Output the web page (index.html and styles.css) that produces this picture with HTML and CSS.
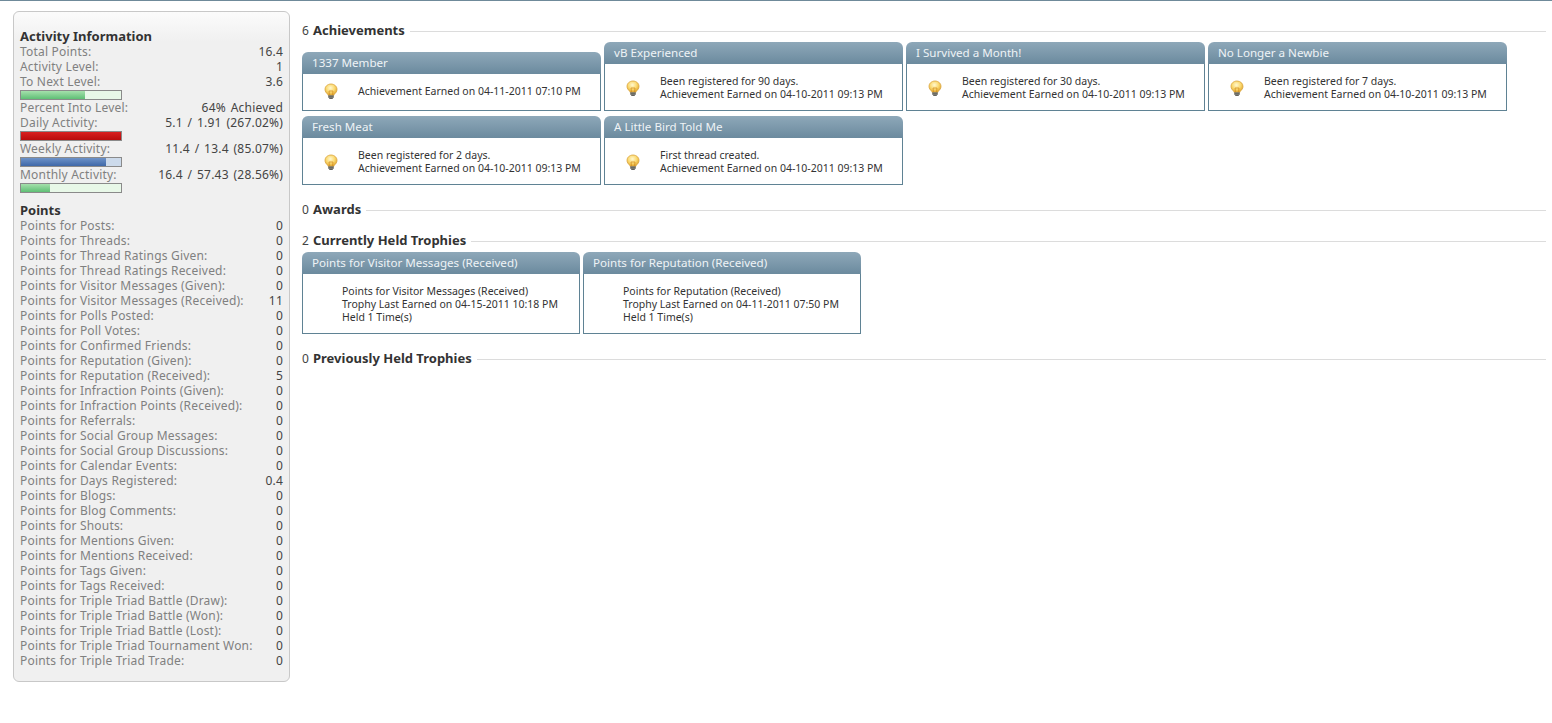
FILE: index.html
```html
<!DOCTYPE html>
<html lang="en">
<head>
    <meta charset="UTF-8">
    <title>Activity Information</title>
    <link rel="stylesheet" href="styles.css">
</head>
<body>
    <svg class="defs" width="0" height="0">
        <defs>
            <radialGradient id="glass" cx="45%" cy="35%" r="65%">
                <stop offset="0" stop-color="#fff8d0"/>
                <stop offset="0.55" stop-color="#fbd970"/>
                <stop offset="1" stop-color="#e0a52c"/>
            </radialGradient>
            <symbol id="bulb" viewBox="0 0 16 16">
                <path d="M8 1C4.6 1 2 3.4 2 6.4c0 2 1.1 3.3 2.2 4.3.6.6.8 1 .8 1.6h6c0-.6.2-1 .8-1.6C12.900 9.700 14 8.400 14 6.400 14 3.400 11.400 1 8 1z" fill="url(#glass)" stroke="#d9a441" stroke-width="0.8"/>
                <path d="M6.500 12 6 8h4l-.5 4" fill="none" stroke="#d08a20" stroke-width="0.7"/>
                <rect x="5.200" y="12.300" width="5.600" height="2.500" fill="#6b6b63"/>
                <rect x="6.200" y="14.800" width="3.600" height="1" fill="#3e3e3a"/>
            </symbol>
        </defs>
    </svg>

    <div class="page">
        <div class="sidebar">
            <h3>Activity Information</h3>
            <div class="row"><span>Total Points:</span><b>16.4</b></div>
            <div class="row"><span>Activity Level:</span><b>1</b></div>
            <div class="row"><span>To Next Level:</span><b>3.6</b></div>
            <div class="bar green"><div class="fill" style="width: 64%"></div></div>
            <div class="row"><span>Percent Into Level:</span><b>64% Achieved</b></div>
            <div class="row"><span>Daily Activity:</span><b>5.1 / 1.91 (267.02%)</b></div>
            <div class="bar red"><div class="fill" style="width: 100%"></div></div>
            <div class="row"><span>Weekly Activity:</span><b>11.4 / 13.4 (85.07%)</b></div>
            <div class="bar blue"><div class="fill" style="width: 85%"></div></div>
            <div class="row"><span>Monthly Activity:</span><b>16.4 / 57.43 (28.56%)</b></div>
            <div class="bar green"><div class="fill" style="width: 28.5%"></div></div>

            <h3 class="second">Points</h3>
            <div class="row"><span>Points for Posts:</span><b>0</b></div>
            <div class="row"><span>Points for Threads:</span><b>0</b></div>
            <div class="row"><span>Points for Thread Ratings Given:</span><b>0</b></div>
            <div class="row"><span>Points for Thread Ratings Received:</span><b>0</b></div>
            <div class="row"><span>Points for Visitor Messages (Given):</span><b>0</b></div>
            <div class="row"><span>Points for Visitor Messages (Received):</span><b>11</b></div>
            <div class="row"><span>Points for Polls Posted:</span><b>0</b></div>
            <div class="row"><span>Points for Poll Votes:</span><b>0</b></div>
            <div class="row"><span>Points for Confirmed Friends:</span><b>0</b></div>
            <div class="row"><span>Points for Reputation (Given):</span><b>0</b></div>
            <div class="row"><span>Points for Reputation (Received):</span><b>5</b></div>
            <div class="row"><span>Points for Infraction Points (Given):</span><b>0</b></div>
            <div class="row"><span>Points for Infraction Points (Received):</span><b>0</b></div>
            <div class="row"><span>Points for Referrals:</span><b>0</b></div>
            <div class="row"><span>Points for Social Group Messages:</span><b>0</b></div>
            <div class="row"><span>Points for Social Group Discussions:</span><b>0</b></div>
            <div class="row"><span>Points for Calendar Events:</span><b>0</b></div>
            <div class="row"><span>Points for Days Registered:</span><b>0.4</b></div>
            <div class="row"><span>Points for Blogs:</span><b>0</b></div>
            <div class="row"><span>Points for Blog Comments:</span><b>0</b></div>
            <div class="row"><span>Points for Shouts:</span><b>0</b></div>
            <div class="row"><span>Points for Mentions Given:</span><b>0</b></div>
            <div class="row"><span>Points for Mentions Received:</span><b>0</b></div>
            <div class="row"><span>Points for Tags Given:</span><b>0</b></div>
            <div class="row"><span>Points for Tags Received:</span><b>0</b></div>
            <div class="row"><span>Points for Triple Triad Battle (Draw):</span><b>0</b></div>
            <div class="row"><span>Points for Triple Triad Battle (Won):</span><b>0</b></div>
            <div class="row"><span>Points for Triple Triad Battle (Lost):</span><b>0</b></div>
            <div class="row"><span>Points for Triple Triad Tournament Won:</span><b>0</b></div>
            <div class="row"><span>Points for Triple Triad Trade:</span><b>0</b></div>
        </div>

        <div class="main">
            <div class="section">
                <h2><span>6 <strong>Achievements</strong></span></h2>
                <div class="cards">
                    <div class="card single">
                        <div class="card-title">1337 Member</div>
                        <div class="card-body">
                            <svg class="icon"><use href="#bulb"/></svg>
                            <div class="card-text">Achievement Earned on 04-11-2011 07:10 PM</div>
                        </div>
                    </div>
                    <div class="card">
                        <div class="card-title">vB Experienced</div>
                        <div class="card-body">
                            <svg class="icon"><use href="#bulb"/></svg>
                            <div class="card-text">Been registered for 90 days.<br>Achievement Earned on 04-10-2011 09:13 PM</div>
                        </div>
                    </div>
                    <div class="card">
                        <div class="card-title">I Survived a Month!</div>
                        <div class="card-body">
                            <svg class="icon"><use href="#bulb"/></svg>
                            <div class="card-text">Been registered for 30 days.<br>Achievement Earned on 04-10-2011 09:13 PM</div>
                        </div>
                    </div>
                    <div class="card">
                        <div class="card-title">No Longer a Newbie</div>
                        <div class="card-body">
                            <svg class="icon"><use href="#bulb"/></svg>
                            <div class="card-text">Been registered for 7 days.<br>Achievement Earned on 04-10-2011 09:13 PM</div>
                        </div>
                    </div>
                    <div class="card">
                        <div class="card-title">Fresh Meat</div>
                        <div class="card-body">
                            <svg class="icon"><use href="#bulb"/></svg>
                            <div class="card-text">Been registered for 2 days.<br>Achievement Earned on 04-10-2011 09:13 PM</div>
                        </div>
                    </div>
                    <div class="card">
                        <div class="card-title">A Little Bird Told Me</div>
                        <div class="card-body">
                            <svg class="icon"><use href="#bulb"/></svg>
                            <div class="card-text">First thread created.<br>Achievement Earned on 04-10-2011 09:13 PM</div>
                        </div>
                    </div>
                </div>
            </div>

            <div class="section empty">
                <h2><span>0 <strong>Awards</strong></span></h2>
            </div>

            <div class="section">
                <h2><span>2 <strong>Currently Held Trophies</strong></span></h2>
                <div class="cards">
                    <div class="card trophy">
                        <div class="card-title">Points for Visitor Messages (Received)</div>
                        <div class="card-body">
                            <div class="card-text">Points for Visitor Messages (Received)<br>Trophy Last Earned on 04-15-2011 10:18 PM<br>Held 1 Time(s)</div>
                        </div>
                    </div>
                    <div class="card trophy">
                        <div class="card-title">Points for Reputation (Received)</div>
                        <div class="card-body">
                            <div class="card-text">Points for Reputation (Received)<br>Trophy Last Earned on 04-11-2011 07:50 PM<br>Held 1 Time(s)</div>
                        </div>
                    </div>
                </div>
            </div>

            <div class="section">
                <h2><span>0 <strong>Previously Held Trophies</strong></span></h2>
            </div>
        </div>
    </div>
</body>
</html>
```

FILE: styles.css
```css
body {
    margin: 0;
    background: white;
    border-top: 1px solid #6f8a9a;
    font-family: 'Noto Sans', sans-serif;
    font-size: 12px;
    color: #333;
}

.defs {
    position: absolute;
}

.page {
    display: flex;
    align-items: flex-start;
    padding: 10px 6px 0 13px;
    gap: 12px;
}

.sidebar {
    box-sizing: border-box;
    width: 277px;
    height: 671px;
    flex-shrink: 0;
    padding: 16px 6px 0;
    background: linear-gradient(#fbfbfb, #f0f0f0 30px);
    border: 1px solid #c8c8c8;
    border-radius: 6px;
}

.sidebar h3 {
    margin: 0;
    height: 16px;
    line-height: 16px;
    font-size: 13px;
    font-weight: bold;
    color: #333;
}

.sidebar h3.second {
    margin-top: 9px;
}

.row {
    display: flex;
    justify-content: space-between;
    height: 15px;
    line-height: 15px;
    letter-spacing: 0.2px;
    color: #808080;
    white-space: nowrap;
}

.row b {
    font-weight: normal;
    word-spacing: 1.5px;
    color: #444;
}

.bar {
    box-sizing: border-box;
    width: 102px;
    height: 10px;
    margin: 1px 0 0;
    border: 1px solid #8a8a8a;
    background: #e8f8e8;
}

.bar .fill {
    height: 100%;
}

.bar.green .fill {
    background: linear-gradient(#a5e0ac, #5fbf75);
}

.bar.red .fill {
    background: linear-gradient(#d92020, #b80c0c);
}

.bar.blue {
    background: #ccdaeb;
}

.bar.blue .fill {
    background: linear-gradient(#6d92c8, #3f68a8);
}

.main {
    flex: 1;
    padding-top: 11px;
}

.section {
    margin-bottom: 16px;
}

.section.empty {
    margin-bottom: 13px;
}

.section h2 {
    display: flex;
    align-items: center;
    gap: 5px;
    height: 18px;
    margin: 0 0 2px;
    font-size: 12px;
    font-weight: normal;
    line-height: 18px;
    color: #444;
}

.section h2 span {
    margin-top: -2px;
}

.section h2::after {
    content: "";
    flex: 1;
    height: 1px;
    background: #dcdcdc;
}

.section h2 strong {
    margin-left: 1px;
    font-size: 13px;
    color: #333;
}

.cards {
    display: flex;
    flex-wrap: wrap;
    align-items: flex-end;
    gap: 5px 3px;
}

.card {
    width: 299px;
    box-sizing: border-box;
}

.card.trophy {
    width: 278px;
}

.card-title {
    box-sizing: border-box;
    height: 22px;
    line-height: 22px;
    padding-left: 10px;
    background: linear-gradient(#8ea8b9, #6b8a9e);
    border-radius: 6px 6px 0 0;
    color: #eef3f6;
    font-size: 11.6px;
}

.card-body {
    display: flex;
    align-items: center;
    padding: 11px 0 9px 20px;
    background: white;
    border: 1px solid #5f8294;
    border-top: none;
}

.single .card-body {
    padding: 9px 0 11px 20px;
}

.trophy .card-body {
    padding-left: 39px;
}

.icon {
    width: 16px;
    height: 16px;
    margin-right: 19px;
    flex-shrink: 0;
}

.card-text {
    font-size: 10.5px;
    line-height: 13px;
    color: #333;
    white-space: nowrap;
}
```
